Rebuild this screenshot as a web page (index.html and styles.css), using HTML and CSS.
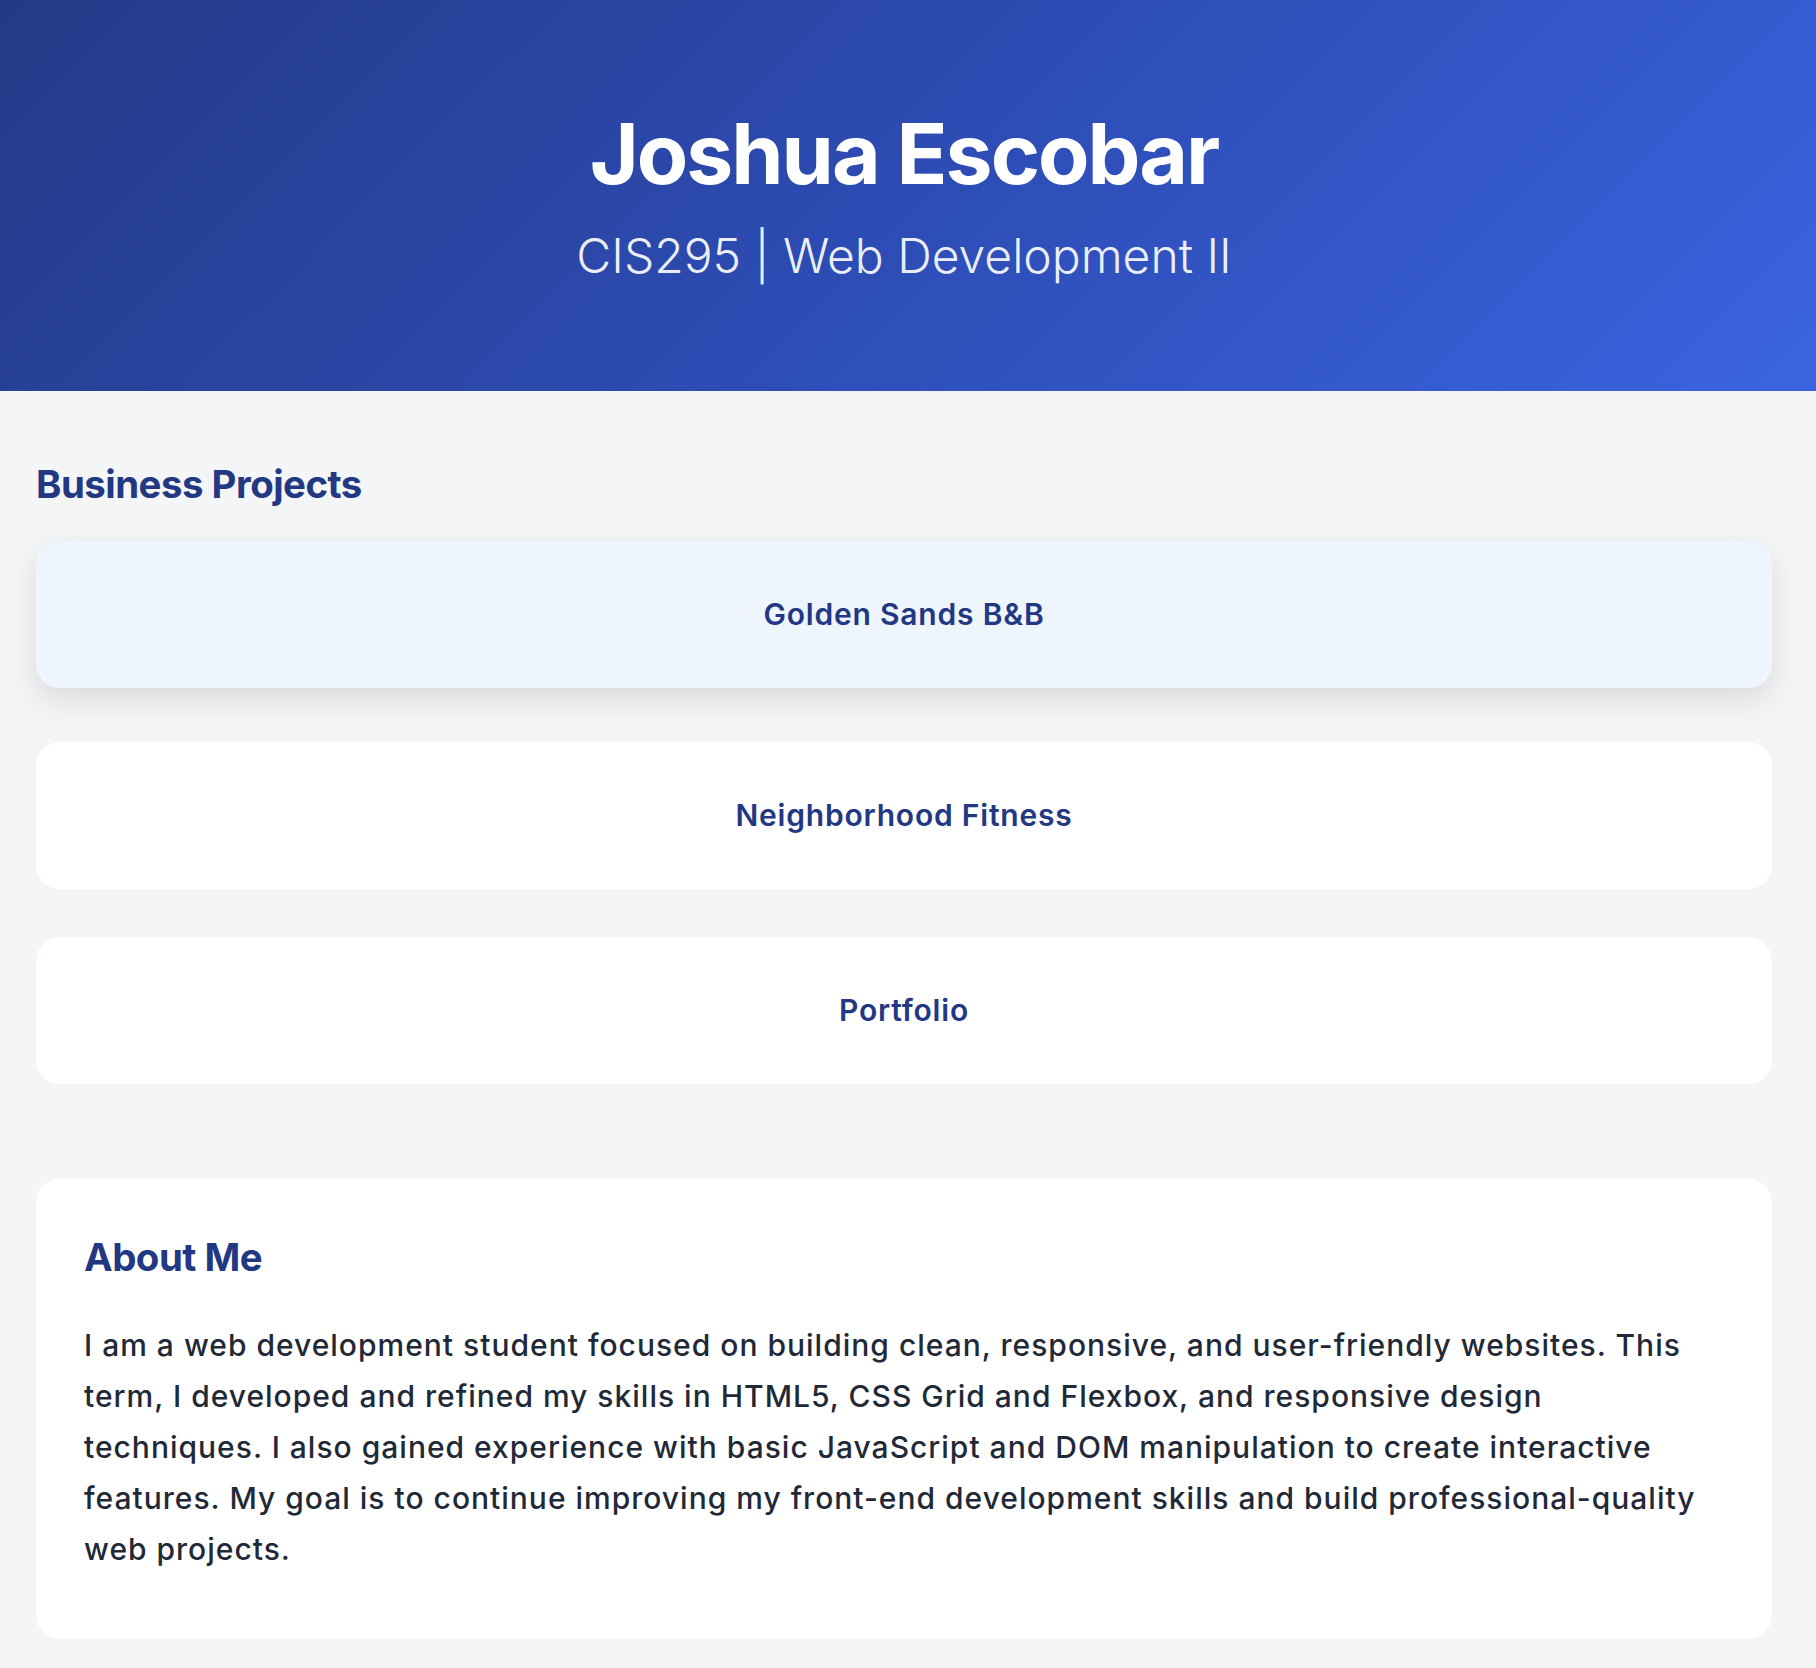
FILE: index.html
```html
<!DOCTYPE html>
<html lang="en">
<head>
<meta charset="utf-8">
<title>Joshua Escobar | CIS295</title>
<link rel="stylesheet" href="styles.css">
</head>
<body>
<header class="hero">
  <h1 class="hero-title">Joshua Escobar</h1>
  <p class="hero-sub">CIS295 | Web Development II</p>
</header>
<main class="main">
  <section class="projects">
    <h2 class="section-title">Business Projects</h2>
    <div class="project-list">
      <a class="project-card is-hover" href="#">Golden Sands B&amp;B</a>
      <a class="project-card" href="#">Neighborhood Fitness</a>
      <a class="project-card" href="#">Portfolio</a>
    </div>
  </section>
  <section class="about">
    <h2 class="section-title about-title">About Me</h2>
    <p class="about-text">I am a web development student focused on building clean, responsive, and user-friendly websites. This term, I developed and refined my skills in HTML5, CSS Grid and Flexbox, and responsive design techniques. I also gained experience with basic JavaScript and DOM manipulation to create interactive features. My goal is to continue improving my front-end development skills and build professional-quality web projects.</p>
  </section>
</main>
</body>
</html>
```
FILE: styles.css
```css
* { box-sizing: border-box; }

html, body {
  margin: 0;
  padding: 0;
}

body {
  font-family: Inter, "Noto Sans", "Liberation Sans", sans-serif;
  background: #f4f5f7;
  color: #1f2937;
}

.hero {
  background: linear-gradient(135deg, #233a86 0%, #2d4cb4 50%, #3a64e0 100%);
  color: #ffffff;
  text-align: center;
  padding: 103px 8px 106px 0;
}

.hero-title {
  margin: 0 0 22px;
  font-size: 84px;
  line-height: 102px;
  font-weight: 700;
  letter-spacing: -2px;
}

.hero-sub {
  margin: 0;
  font-size: 48px;
  line-height: 58px;
  font-weight: 300;
  color: rgba(255, 255, 255, 0.92);
}

.main {
  padding: 70px 44px 20px 36px;
}

.section-title {
  margin: 0 0 40px;
  font-size: 38.4px;
  line-height: 46px;
  font-weight: 700;
  letter-spacing: -0.5px;
  color: #233883;
}

.project-list {
  display: flex;
  flex-direction: column;
  gap: 48px;
}

.project-card {
  display: block;
  background: #ffffff;
  border-radius: 24px;
  padding: 48px;
  text-align: center;
  font-size: 30px;
  line-height: 51px;
  font-weight: 600;
  letter-spacing: 0.8px;
  color: #233883;
  text-decoration: none;
}

.project-card.is-hover {
  background: #eff5fe;
  transform: translateY(-6px);
  box-shadow: 0 12px 32px rgba(0, 0, 0, 0.11);
}

.about {
  margin-top: 95px;
  background: #ffffff;
  border-radius: 24px;
  padding: 55px 48px 64px;
}

.about-title {
  margin-bottom: 40px;
}

.about-text {
  margin: 0;
  font-size: 30px;
  line-height: 51px;
  font-weight: 500;
  letter-spacing: 1px;
  color: #1f2937;
}
```
